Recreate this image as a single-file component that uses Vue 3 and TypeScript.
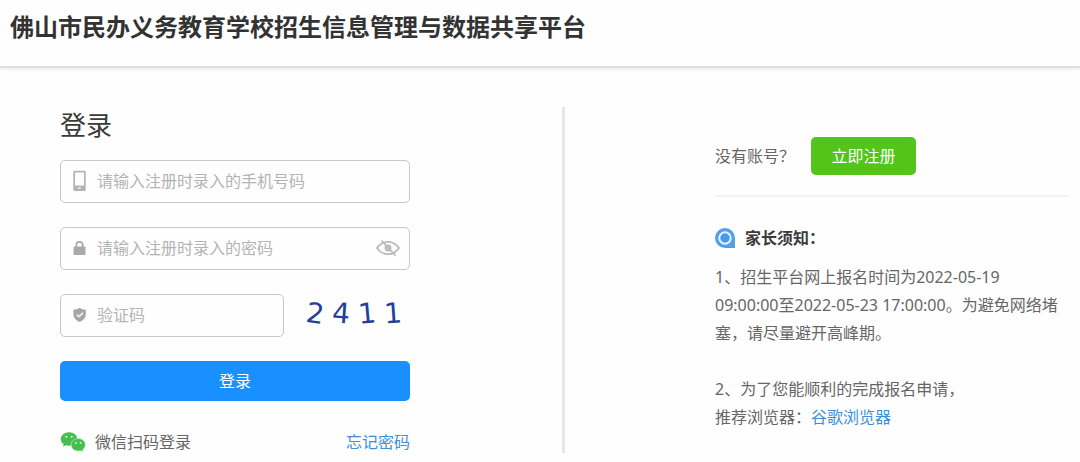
<script setup lang="ts">
import { ref } from 'vue'

const phone = ref('')
const password = ref('')
const code = ref('')
const showPassword = ref(false)
const captcha = ['2', '4', '1', '1']
</script>

<template>
  <div class="page">
    <header class="header">
      <h1>佛山市民办义务教育学校招生信息管理与数据共享平台</h1>
    </header>
    <main class="main">
      <section class="login">
        <form class="form" @submit.prevent>
          <h2>登录</h2>
          <div class="field">
            <svg class="icon" viewBox="0 0 14 22" width="14" height="22" aria-hidden="true">
              <path fill="#b4b4b4" fill-rule="evenodd" d="M1.500 .8h10a1.200 1.200 0 0 1 1.200 1.200v17.800a1.200 1.200 0 0 1-1.200 1.200H1.500a1.200 1.200 0 0 1-1.200-1.200V2A1.200 1.200 0 0 1 1.500 .8zM2 2.400v13h9V2.400zM5.200 17.400v1.300h2.600v-1.300z" />
            </svg>
            <input v-model="phone" type="tel" aria-label="手机号码" placeholder="请输入注册时录入的手机号码" />
          </div>
          <div class="field">
            <svg class="icon" viewBox="0 0 14 16" width="14" height="16" aria-hidden="true">
              <rect x=".5" y="6.500" width="12" height="8.500" rx="1" fill="#a9a9a9" />
              <path d="M3.300 8V5a3.200 3.200 0 0 1 6.400 0V8" fill="none" stroke="#a9a9a9" stroke-width="1.700" />
            </svg>
            <input
              v-model="password"
              :type="showPassword ? 'text' : 'password'"
              aria-label="密码"
              placeholder="请输入注册时录入的密码"
            />
            <button class="eye" type="button" aria-label="显示密码" @click="showPassword = !showPassword">
              <svg viewBox="0 0 24 18" width="24" height="18" aria-hidden="true">
                <g fill="none" stroke="#b8b8b8" stroke-width="1.700">
                  <path d="M1 9C4 4.800 7.700 2.800 12 2.800S20 4.800 23 9c-3 4.200-6.700 6.200-11 6.200S4 13.200 1 9z" />
                  <circle cx="12" cy="9" r="2.600" fill="#d2d2d2" />
                  <path d="M5.500 1.500L19.500 16.500" />
                </g>
              </svg>
            </button>
          </div>
          <div class="code-row">
            <div class="field">
              <svg class="icon" viewBox="0 0 14 16" width="14" height="16" aria-hidden="true">
                <path fill="#a6a6a6" d="M6.600 .8c1.700 1.200 3.800 1.900 6.200 2v4.700c0 3.300-2.100 5.800-6.200 7.500-4.100-1.700-6.200-4.200-6.200-7.500V2.800c2.400-.1 4.500-.8 6.200-2z" />
                <path d="M3.800 7.600l2.200 2.200 3.900-3.900" fill="none" stroke="#f4f4f4" stroke-width="1.500" />
              </svg>
              <input v-model="code" type="text" aria-label="验证码" placeholder="验证码" />
            </div>
            <button class="captcha" type="button" aria-label="刷新验证码">
              <span v-for="(digit, i) in captcha" :key="i" :class="['digit', `tilt-${i}`]">{{ digit }}</span>
            </button>
          </div>
          <button class="submit" type="submit">登录</button>
          <div class="links">
            <a class="wechat" href="#">
              <svg viewBox="0 0 26 22" width="26" height="22" aria-hidden="true">
                <path fill="#45c04f" d="M9 1.200C4.300 1.200.8 4.200.8 8c0 2.200 1.100 4 2.900 5.200L3 15.700l2.900-1.500c1 .3 2 .5 3.100.5 4.700 0 8.300-3 8.300-6.700S13.700 1.200 9 1.200z" />
                <path fill="#45c04f" stroke="#d5f2d7" stroke-width=".6" d="M18.200 7.600c-4 0-7.100 2.600-7.100 6.200s3.100 6.200 7.100 6.200c.9 0 1.700-.1 2.500-.3l2.600 1.400-.7-2.200c1.700-1.200 2.700-2.900 2.700-5.100 0-3.600-3.100-6.200-7.100-6.200z" />
                <g fill="#e9f8e9">
                  <circle cx="6.300" cy="5.800" r="1" />
                  <circle cx="11.700" cy="5.800" r="1" />
                  <circle cx="15.900" cy="11.900" r=".9" />
                  <circle cx="20.600" cy="11.900" r=".9" />
                </g>
              </svg>
              <span>微信扫码登录</span>
            </a>
            <a class="blue" href="#">忘记密码</a>
          </div>
        </form>
      </section>
      <aside class="info">
        <div class="register">
          <span>没有账号？</span>
          <button type="button">立即注册</button>
        </div>
        <h3>
          <svg viewBox="0 0 20 20" width="20" height="20" aria-hidden="true">
            <path fill="#559fe8" d="M10 0a10 10 0 0 1 10 10v10H10a10 10 0 0 1 0-20z" />
            <circle cx="10" cy="10" r="5.700" fill="#4799ec" stroke="#e6f3ff" stroke-width="2" />
          </svg>
          <span>家长须知：</span>
        </h3>
        <p>1、招生平台网上报名时间为2022-05-19<br />09:00:00至2022-05-23 17:00:00。为避免网络堵<br />塞，请尽量避开高峰期。</p>
        <p>2、为了您能顺利的完成报名申请，<br />推荐浏览器：<a class="blue" href="#">谷歌浏览器</a></p>
      </aside>
    </main>
  </div>
</template>

<style>
body {
  margin: 0;
  background: #fefefe;
}
</style>

<style scoped>
.page {
  color: #666;
  font-family: "Noto Sans", "Noto Sans CJK SC", sans-serif;
  font-size: 16px;
  line-height: 22px;
}
h1,
h2,
h3,
p {
  margin: 0;
}
button,
input {
  font: inherit;
  border: 0;
  padding: 0;
}
button {
  cursor: pointer;
}
a {
  color: inherit;
  text-decoration: none;
}
.blue {
  color: #3f8fd4;
}
.header {
  padding: 9px 10px 21px;
  border-bottom: 2px solid #e0e0e0;
  box-shadow: 0 1px 3px #e4e4e4;
}
.header h1 {
  color: #333;
  font-size: 24px;
  font-weight: 700;
  line-height: 36px;
}
.main {
  display: grid;
  grid-template-columns: 565fr 515fr;
  margin-top: 39px;
}
.login {
  padding-left: 60px;
  border-right: 3px solid #e8e8e8;
}
.form {
  max-width: 350px;
}
.form h2 {
  margin-bottom: 17px;
  color: #3a3a3a;
  font-size: 26px;
  font-weight: 400;
  line-height: 36px;
}
.field {
  display: flex;
  align-items: center;
  box-sizing: border-box;
  height: 43px;
  margin-bottom: 24px;
  padding: 0 9px 2px 12px;
  border: 1px solid #c8c8c8;
  border-radius: 5px;
}
.icon {
  flex: none;
  margin-right: 10px;
}
.field input {
  flex: 1;
  min-width: 0;
  height: 30px;
  background: none;
  outline: none;
  color: #555;
}
.field input::placeholder {
  color: #b4b4b4;
  opacity: 1;
}
.eye {
  display: flex;
  background: none;
}
.code-row {
  display: flex;
  gap: 18px;
}
.code-row .field {
  flex: 1;
  min-width: 0;
}
.captcha {
  display: flex;
  flex: none;
  box-sizing: border-box;
  width: 108px;
  height: 40px;
  padding-right: 4px;
  background: none;
  color: #233f9a;
  font-family: "DejaVu Sans", sans-serif;
  font-size: 28px;
  line-height: 40px;
}
.digit {
  flex: 1;
  text-align: center;
}
.tilt-0 {
  transform: rotate(8deg);
}
.tilt-1 {
  transform: rotate(4deg);
}
.tilt-2 {
  transform: rotate(-5deg);
}
.tilt-3 {
  transform: rotate(-4deg);
}
.submit {
  display: block;
  width: 100%;
  height: 40px;
  border-radius: 5px;
  background: #1890ff;
  color: #fff;
}
.links {
  display: flex;
  justify-content: space-between;
  margin-top: 30px;
}
.wechat {
  display: flex;
  gap: 9px;
}
.info {
  padding: 30px 11px 0 150px;
}
.register {
  display: flex;
  align-items: center;
  gap: 16px;
  padding-bottom: 20px;
  border-bottom: 2px solid #f3f3f3;
}
.register button {
  width: 105px;
  height: 38px;
  border-radius: 5px;
  background: #52c41a;
  color: #fff;
}
.info h3 {
  display: flex;
  align-items: center;
  gap: 10px;
  margin: 29px 0 13px;
  color: #3c3c3c;
  font-size: 16px;
  font-weight: 700;
  line-height: 24px;
}
.info p {
  line-height: 28px;
}
.info p + p {
  margin-top: 28px;
}
</style>
